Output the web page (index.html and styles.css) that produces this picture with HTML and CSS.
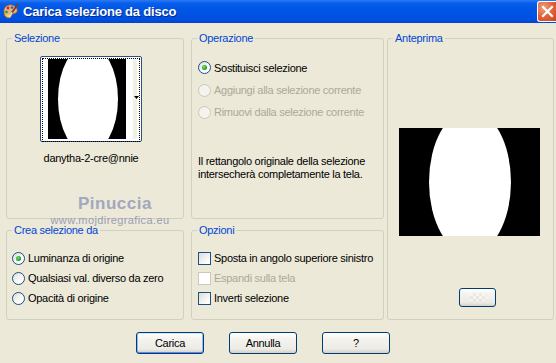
FILE: index.html
```html
<!DOCTYPE html>
<html lang="it">

<head>
  <meta charset="UTF-8">
  <title>Carica selezione da disco</title>
  <link rel="stylesheet" href="styles.css">
</head>

<body>
  <div class="window">
    <div class="titlebar">
      <svg class="app-icon" width="17" height="18" viewBox="0 0 17 18">
        <path d="M2 9 C1 4 6 1 10 2 C14 3 16 6 15 9 C14 11 11 10 10 12 C9 15 6 16 4 14 C2 13 2 11 2 9 Z" fill="#E9B27A" stroke="#8A5A2E" stroke-width="0.8"/>
        <circle cx="6" cy="5" r="1.4" fill="#E02020"/>
        <circle cx="10" cy="4.5" r="1.3" fill="#2060E0"/>
        <circle cx="4.5" cy="9" r="1.3" fill="#20A040"/>
        <circle cx="6" cy="12.5" r="1.2" fill="#F0E020"/>
        <path d="M15.5 1.5 L9 11" stroke="#6A4424" stroke-width="1.8" stroke-linecap="round"/>
        <path d="M9.5 10 L7.5 13.5" stroke="#D8D8D8" stroke-width="2" stroke-linecap="round"/>
      </svg>
      <span class="title">Carica selezione da disco</span>
      <span class="close">
        <svg width="21" height="21" viewBox="0 0 21 21">
          <path d="M6 6 L15 15 M15 6 L6 15" stroke="#fff" stroke-width="2.2" stroke-linecap="square"/>
        </svg>
      </span>
    </div>

    <div class="groups">
      <fieldset class="box sel">
        <legend>Selezione</legend>
        <div class="sel-body">
          <div class="combo">
            <div class="thumb">
              <svg width="89" height="80" viewBox="0 0 89 80">
                <rect x="0" y="0" width="78" height="80" fill="#000"/>
                <rect x="78" y="0" width="11" height="80" fill="#fff"/>
                <rect x="85" y="0" width="4" height="80" fill="#F1EFE6"/>
                <ellipse cx="40" cy="40" rx="30" ry="54" fill="#fff"/>
                <path d="M86 37 L91 37 L88.5 40 Z" fill="#000"/>
              </svg>
            </div>
          </div>
          <div class="sel-name">danytha-2-cre@nnie</div>
        </div>
      </fieldset>

      <fieldset class="box op">
        <legend>Operazione</legend>
        <div class="op-body">
          <div class="row first"><span class="radio on"></span>Sostituisci selezione</div>
          <div class="row off"><span class="radio"></span>Aggiungi alla selezione corrente</div>
          <div class="row off"><span class="radio"></span>Rimuovi dalla selezione corrente</div>
          <p class="note">Il rettangolo originale della selezione<br>intersecherà completamente la tela.</p>
        </div>
      </fieldset>

      <fieldset class="box prev">
        <legend>Anteprima</legend>
        <div class="prev-body">
          <svg class="prev-img" width="141" height="108" viewBox="0 0 141 108">
            <rect width="141" height="108" fill="#000"/>
            <ellipse cx="71" cy="54" rx="41" ry="72" fill="#fff"/>
          </svg>
          <button class="btn small"><span class="checker"></span></button>
        </div>
      </fieldset>

      <fieldset class="box crea">
        <legend>Crea selezione da</legend>
        <div class="crea-body">
          <div class="row"><span class="radio on"></span>Luminanza di origine</div>
          <div class="row"><span class="radio"></span>Qualsiasi val. diverso da zero</div>
          <div class="row"><span class="radio"></span>Opacità di origine</div>
        </div>
      </fieldset>

      <fieldset class="box opz">
        <legend>Opzioni</legend>
        <div class="opz-body">
          <div class="row"><span class="check"></span>Sposta in angolo superiore sinistro</div>
          <div class="row off"><span class="check"></span>Espandi sulla tela</div>
          <div class="row"><span class="check"></span>Inverti selezione</div>
        </div>
      </fieldset>
    </div>

    <div class="buttons">
      <button class="btn default">Carica</button>
      <button class="btn">Annulla</button>
      <button class="btn">?</button>
    </div>

    <div class="watermark">
      <div class="wm-name">Pinuccia</div>
      <div class="wm-site">www.mojdiregrafica.eu</div>
    </div>
  </div>
</body>

</html>
```

FILE: styles.css
```css
html,
body {
  margin: 0;
  padding: 0;
  overflow: hidden;
}

body {
  background-color: #ECE9D8;
  font-family: "Liberation Sans", Arial, sans-serif;
  font-size: 11px;
  letter-spacing: -0.28px;
  color: #000;
}

.window {
  position: relative;
  width: 556px;
  height: 363px;
}

/* barra del titolo stile XP */
.titlebar {
  height: 23px;
  display: flex;
  align-items: center;
  background: linear-gradient(#2A7CF2 0, #0A5FEC 3px, #0056E6 8px, #0054E3 60%, #004EDD 88%, #0044D2 100%);
  color: #fff;
  position: relative;
}

.app-icon {
  margin-left: 2px;
  margin-top: 1px;
}

.title {
  margin-left: 4px;
  font-weight: bold;
  font-size: 13px;
  letter-spacing: -0.2px;
  text-shadow: 1px 1px 0 #0A2A8A;
}

.close {
  position: absolute;
  left: 537px;
  top: 1px;
  width: 19px;
  height: 19px;
  border: 1px solid #fff;
  border-right: none;
  border-radius: 3px 0 0 3px;
  background: radial-gradient(circle at 30% 30%, #F0A080 0, #E2663E 45%, #C5401A 100%);
  overflow: hidden;
}

.close svg {
  display: block;
  margin-left: -1px;
  margin-top: -1px;
}

/* gruppi */
.groups {
  display: grid;
  grid-template-columns: 178px 7px 193px 3px 167px;
  grid-template-rows: 188px 97px;
  row-gap: 4px;
  padding: 8px 0 0 6px;
}

.box {
  margin: 0;
  padding: 0;
  min-width: 0;
  border: 1px solid #D0D0BF;
  border-radius: 3px;
  box-sizing: border-box;
}

.box legend {
  margin-left: 5px;
  padding: 0 2px;
  line-height: 14px;
  color: #0046D5;
}

.sel {
  grid-column: 1;
  grid-row: 1;
}

.op {
  grid-column: 3;
  grid-row: 1;
}

.prev {
  grid-column: 5;
  grid-row: 1 / 3;
}

.crea {
  grid-column: 1;
  grid-row: 2;
}

.opz {
  grid-column: 3;
  grid-row: 2;
}

.sel-body {
  padding: 11px 0 0 33px;
  width: 102px;
}

.combo {
  width: 102px;
  height: 86px;
  box-sizing: border-box;
  border: 1px solid #2B4F7E;
  border-radius: 2px;
  background: #fff;
  padding: 1px;
}

.thumb {
  height: 82px;
  border: 1px dotted #000;
  padding: 0 0 0 5px;
  overflow: hidden;
}

.thumb svg {
  display: block;
  overflow: visible;
}

.sel-name {
  margin-top: 10px;
  line-height: 12px;
  text-align: center;
}

.op-body {
  padding: 11px 0 0 6px;
}

.row {
  display: flex;
  align-items: center;
  height: 22px;
  white-space: nowrap;
}

.row.first {
  height: 23px;
}

.row.off {
  color: #ACA899;
}

.note {
  margin: 32px 0 0;
  line-height: 13px;
}

.crea-body {
  padding: 11px 0 0 5px;
}

.opz-body {
  padding: 11px 0 0 6px;
}

.crea-body .row,
.opz-body .row {
  height: 20px;
}

/* radio e checkbox */
.radio {
  width: 11px;
  height: 11px;
  margin-right: 3px;
  flex: none;
  border: 1px solid #1C5180;
  border-radius: 50%;
  background: linear-gradient(135deg, #DCDCD7, #fff 70%);
  position: relative;
}

.radio.on::after {
  content: "";
  position: absolute;
  left: 3px;
  top: 3px;
  width: 5px;
  height: 5px;
  border-radius: 50%;
  background: radial-gradient(circle at 40% 40%, #7EE07E, #21A121 60%, #1A7E1A);
}

.off .radio {
  border-color: #CAC8BB;
  background: #F4F3EE;
}

.check {
  width: 11px;
  height: 11px;
  margin-right: 3px;
  flex: none;
  border: 1px solid #1C5180;
  background: linear-gradient(135deg, #DCDCD7, #fff 85%);
}

.off .check {
  border-color: #CAC8BB;
  background: #fff;
}

/* anteprima */
.prev-body {
  display: flex;
  flex-direction: column;
  align-items: flex-start;
}

.prev-img {
  display: block;
  margin: 83px 0 0 11px;
}

.btn {
  font-family: inherit;
  font-size: 11px;
  letter-spacing: -0.28px;
  width: 68px;
  height: 22px;
  padding: 0;
  border: 1px solid #003C74;
  border-radius: 3px;
  background: linear-gradient(#FFFFFF, #F4F3EE 30%, #ECEBE6 80%, #D6D0C5);
  color: #000;
}

.btn.small {
  width: 37px;
  height: 19px;
  margin: 52px 0 0 71px;
  position: relative;
}

.checker {
  position: absolute;
  left: 10px;
  top: 4px;
  width: 16px;
  height: 10px;
  opacity: 0.25;
  background: conic-gradient(#ccc 25%, #fff 0 50%, #ccc 0 75%, #fff 0) 0 0 / 6px 6px;
}

.btn.default {
  box-shadow: inset 0 1px 0 #CEE7FF, inset 0 -1px 0 #6982EE, inset 1px 0 0 #98B8F5, inset -1px 0 0 #98B8F5;
}

.buttons {
  display: flex;
  gap: 25px;
  padding-left: 136px;
  margin-top: 12px;
}

/* filigrana */
.watermark {
  position: absolute;
  left: 50px;
  top: 194px;
  width: 120px;
  text-align: center;
  color: #A3A7BF;
  pointer-events: none;
}

.wm-name {
  margin-left: 10px;
  font-size: 17px;
  font-weight: bold;
  letter-spacing: 0.5px;
  line-height: 20px;
}

.wm-site {
  font-size: 11px;
  letter-spacing: 0.4px;
  line-height: 11px;
  margin-top: 1px;
  color: #9A9EB6;
}
```
